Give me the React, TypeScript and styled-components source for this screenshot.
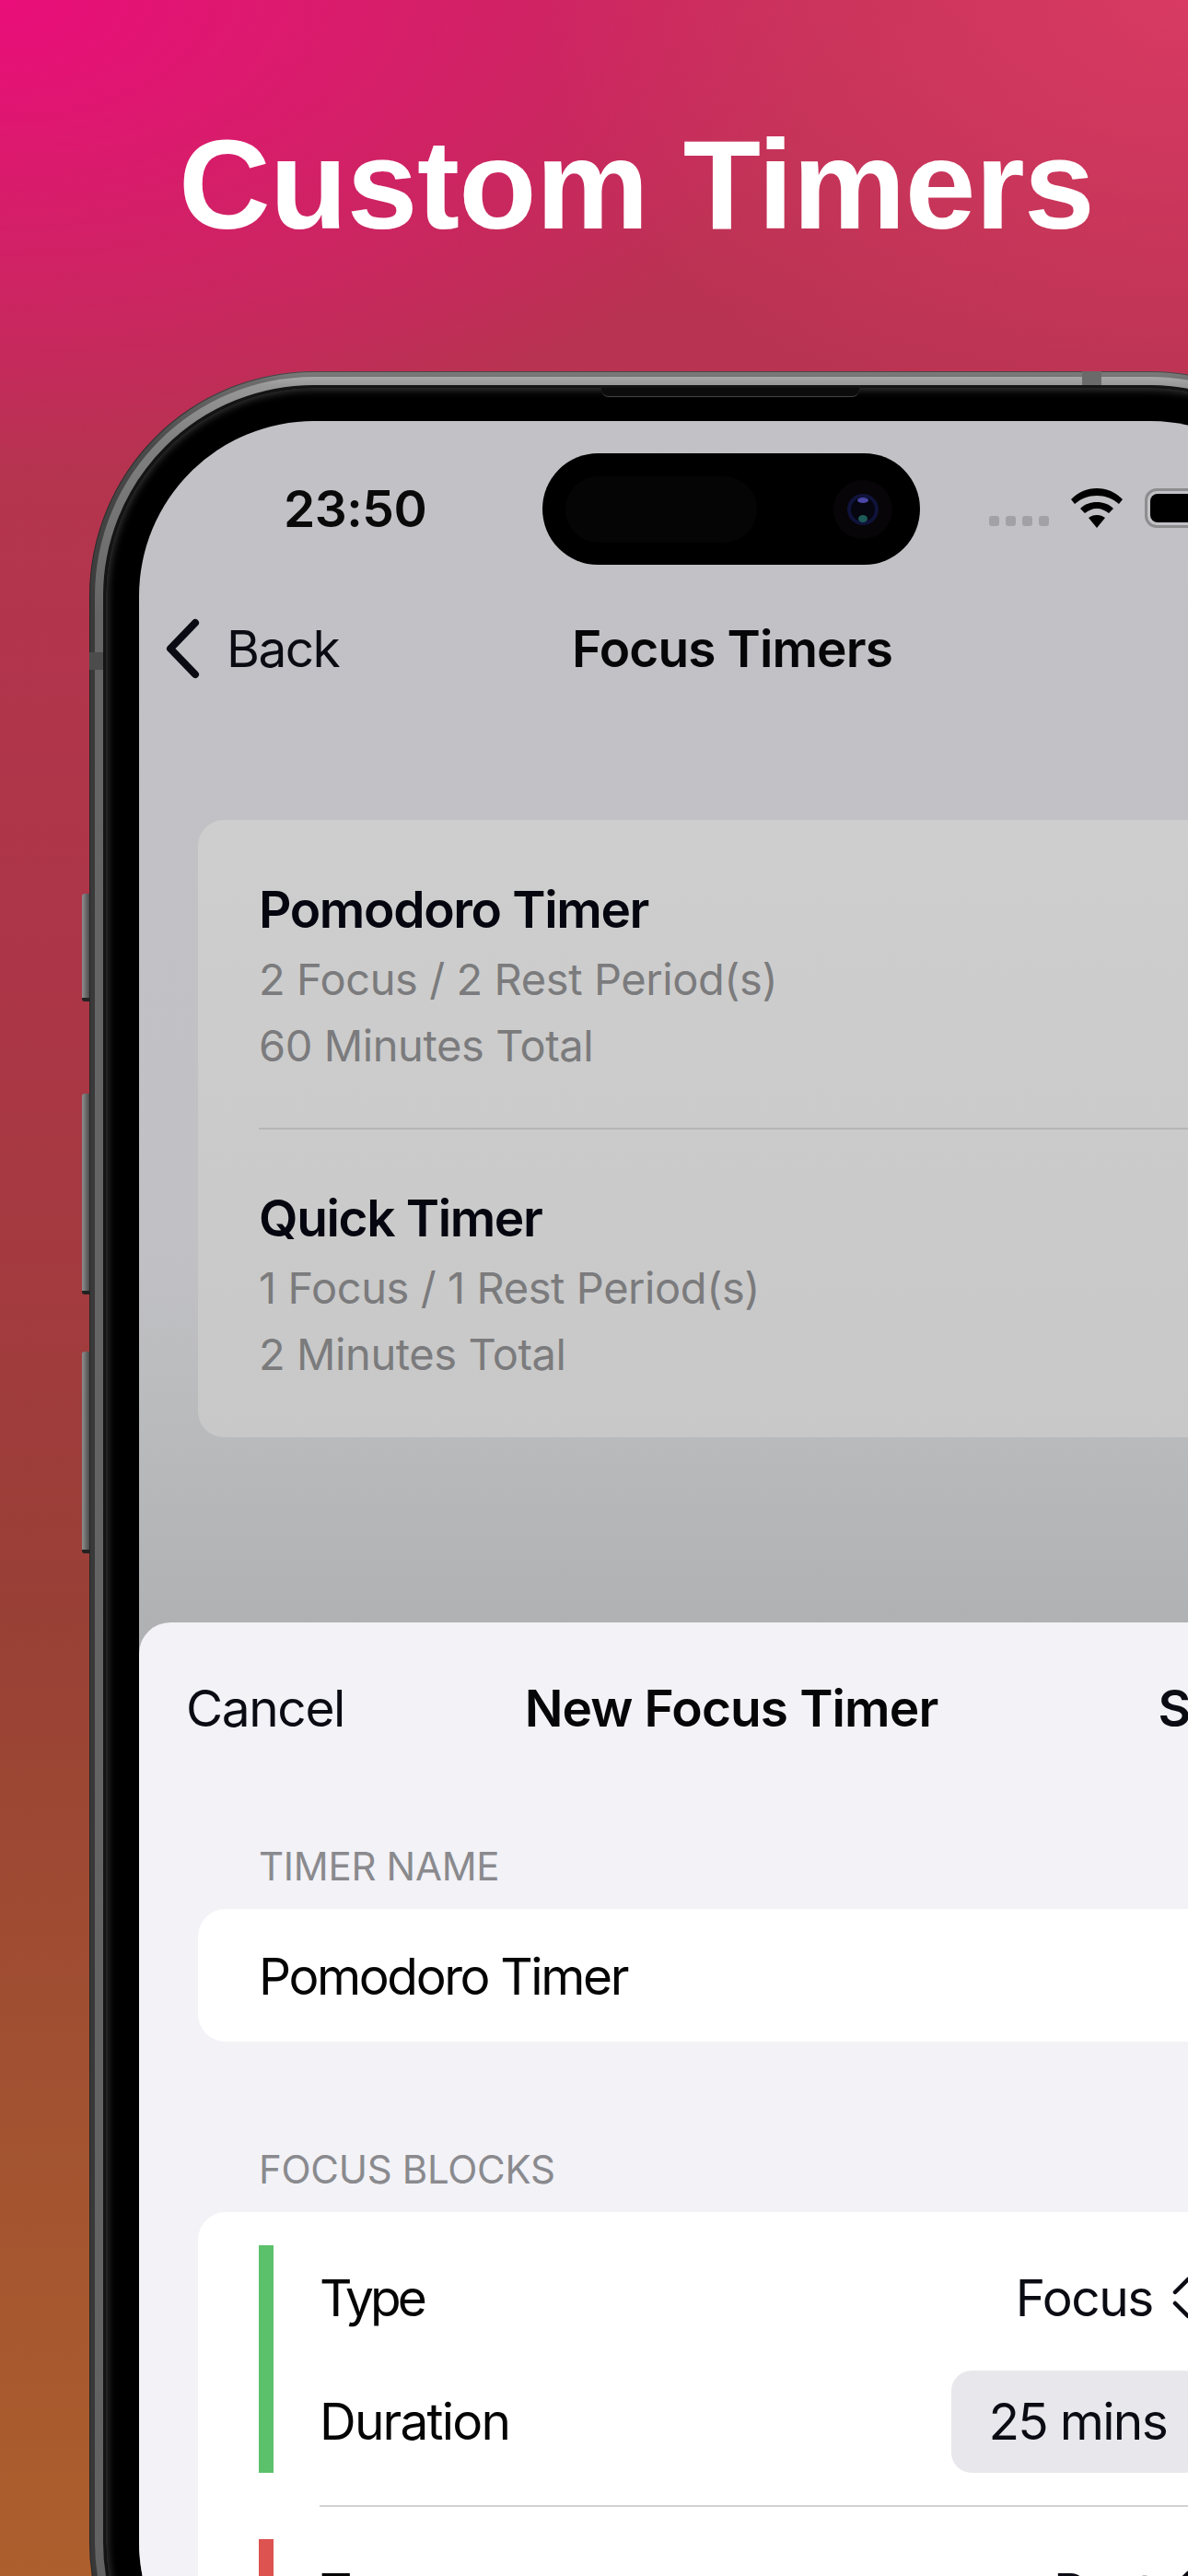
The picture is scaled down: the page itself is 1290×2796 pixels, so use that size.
import React from 'react';
import styled, { createGlobalStyle } from 'styled-components';

const GlobalStyle = createGlobalStyle`
  html, body {
    margin: 0;
    padding: 0;
    background: #b5344f;
  }
  * {
    box-sizing: border-box;
  }
`;

const Page = styled.div`
  width: 1290px;
  height: 2796px;
  overflow: hidden;
  font-family: Inter, 'Liberation Sans', sans-serif;
  background:
    radial-gradient(700px 500px at 1290px 0, rgba(224, 62, 102, 0.72), rgba(224, 62, 102, 0) 100%),
    radial-gradient(900px 520px at 0 0, rgba(234, 14, 122, 1), rgba(234, 14, 122, 0) 100%),
    linear-gradient(180deg, #c22f58 0, #b5344f 500px, #ab3646 1100px, #994036 1750px, #a35430 2350px, #ad5f2d 2796px);
`;

const Headline = styled.h1`
  margin: 0;
  height: 403px;
  padding: 125px 0 0 194px;
  font-family: 'Liberation Sans', Arial, sans-serif;
  font-size: 138px;
  line-height: 150px;
  font-weight: 700;
  letter-spacing: -0.6px;
  color: #fff;
  white-space: nowrap;
`;

const Phone = styled.div`
  position: relative;
  width: 1396px;
  height: 2600px;
  margin-left: 97px;
  padding: 6px;
  border-radius: 244px;
  background: linear-gradient(180deg, #7e7e7e 0, #6c6c6c 10px, #4a4a4a 80px, #3a3a3a 260px, #383838 100%);
  box-shadow: inset 0 0 0 1px rgba(20, 20, 20, 0.5);
`;

const MetalStripe = styled.div`
  height: 100%;
  padding: 9px;
  border-radius: 238px;
  background: linear-gradient(180deg, #a8a8a8 0, #979797 10px, #808080 70px, #656565 260px, #626262 100%);
`;

const SideButton = styled.span<{ $top: number; $height: number }>`
  position: absolute;
  left: -8px;
  top: ${p => p.$top}px;
  width: 8px;
  height: ${p => p.$height}px;
  border-radius: 3px 0 0 3px;
  background: linear-gradient(90deg, #8f8f8f, #4b4b4b);
  border-bottom: 4px solid #222;
`;

const AntennaBand = styled.span`
  position: absolute;
  left: 1078px;
  top: 0;
  width: 21px;
  height: 15px;
  background: #6a6a6a;
`;

const SideBand = styled.span`
  position: absolute;
  left: 0;
  top: 305px;
  width: 15px;
  height: 19px;
  background: #4c4c4c;
`;

const Bezel = styled.div`
  height: 100%;
  padding: 36px;
  border: 3px solid #141414;
  border-radius: 229px;
  background: #000;
  box-shadow: inset 0 0 8px 2px #3a3a3a;
`;

const Speaker = styled.span`
  position: absolute;
  left: 556px;
  top: 18px;
  width: 280px;
  height: 10px;
  border-radius: 0 0 8px 8px;
  background: #0c0c0c;
  border-bottom: 1px solid #444;
`;

const Screen = styled.div`
  position: relative;
  height: 100%;
  overflow: hidden;
  border-radius: 190px;
  background: linear-gradient(180deg, #c2c2c6 0, #c1c1c5 900px, #b9babc 1100px, #b0b1b2 1310px);
`;

const StatusBar = styled.div`
  display: flex;
  align-items: flex-start;
  height: 180px;
  padding: 62px 0 0 157px;
`;

const Clock = styled.span`
  font-size: 55px;
  line-height: 66px;
  font-weight: 600;
  letter-spacing: -0.5px;
  color: #0a0a0a;
`;

const Island = styled.div`
  position: absolute;
  left: 438px;
  top: 35px;
  width: 410px;
  height: 121px;
  padding: 25px 30px 0 25px;
  display: flex;
  justify-content: space-between;
  border-radius: 61px;
  background: #000;
`;

const IslandPill = styled.span`
  width: 208px;
  height: 72px;
  border-radius: 36px;
  background: #050505;
`;

const Lens = styled.svg`
  width: 64px;
  height: 64px;
  margin-top: 4px;
`;

const SignalCluster = styled.div`
  position: absolute;
  left: 923px;
  top: 73px;
  display: flex;
  align-items: flex-start;
`;

const SignalDots = styled.div`
  display: flex;
  gap: 7px;
  margin: 30px 24px 0 0;
`;

const SignalDot = styled.span`
  width: 11px;
  height: 11px;
  border-radius: 3px;
  background: #a2a2a6;
`;

const WifiIcon = styled.svg`
  width: 56px;
  height: 43px;
  margin-right: 24px;
`;

const Battery = styled.div`
  width: 110px;
  height: 43px;
  padding: 3px;
  border: 3px solid #8d8d90;
  border-radius: 13px;
`;

const BatteryFill = styled.span`
  display: block;
  height: 100%;
  border-radius: 8px;
  background: #000;
`;

const NavBar = styled.div`
  display: flex;
  align-items: center;
  justify-content: center;
  position: relative;
  height: 136px;
  padding-bottom: 3px;
`;

const BackLink = styled.div`
  position: absolute;
  left: 28px;
  top: 34px;
  display: flex;
  align-items: center;
  gap: 27px;
  font-size: 55px;
  line-height: 64px;
  letter-spacing: -1.6px;
  color: #0b0b14;
`;

const BackChevron = styled.svg`
  width: 40px;
  height: 66px;
`;

const HeaderTitle = styled.div`
  font-size: 55px;
  line-height: 68px;
  font-weight: 600;
  letter-spacing: -0.88px;
  color: #060608;
  white-space: nowrap;
`;

const TimerList = styled.div`
  width: 1158px;
  height: 670px;
  margin: 117px 0 0 64px;
  padding-left: 66px;
  border-radius: 28px;
  background: linear-gradient(180deg, #cecece, #c8c8c8);
`;

const TimerItem = styled.div<{ $last?: boolean }>`
  height: ${p => (p.$last ? 334 : 336)}px;
  padding-top: ${p => (p.$last ? 66 : 67)}px;
  border-bottom: ${p => (p.$last ? 'none' : '2px solid #b6b6b6')};
`;

const TimerName = styled.div`
  margin-bottom: 10px;
  font-size: 55px;
  line-height: 60px;
  font-weight: 600;
  letter-spacing: -1.35px;
  color: #05060f;
`;

const TimerMeta = styled.div`
  font-size: 47px;
  line-height: 71.5px;
  letter-spacing: -0.42px;
  color: #7b7b7d;
`;

const Sheet = styled.div`
  height: 1200px;
  margin-top: 201px;
  border-radius: 34px 34px 0 0;
  background: #f2f2f7;
`;

const SheetHeader = styled.div`
  display: flex;
  align-items: center;
  justify-content: space-between;
  height: 186px;
  padding: 0 53px 0 51px;
`;

const SheetAction = styled.span<{ $strong?: boolean }>`
  width: 200px;
  font-size: 55px;
  line-height: 68px;
  font-weight: ${p => (p.$strong ? 600 : 400)};
  letter-spacing: ${p => (p.$strong ? -0.4 : -1.4)}px;
  color: #0b0b14;
  text-align: ${p => (p.$strong ? 'right' : 'left')};
`;

const SectionLabel = styled.div<{ $gap: number }>`
  margin-top: ${p => p.$gap}px;
  padding-left: 130px;
  font-size: 42px;
  line-height: 40px;
  letter-spacing: -0.3px;
  color: #8a8a8e;
`;

const Card = styled.div`
  width: 1158px;
  margin: 26px 0 0 64px;
  border-radius: 30px;
  background: #fff;
`;

const NameField = styled.div`
  height: 144px;
  padding-left: 66px;
  font-size: 55px;
  line-height: 146px;
  letter-spacing: -2.4px;
  color: #050505;
`;

const BlockList = styled.div`
  padding: 36px 66px 0;
`;

const Block = styled.div`
  display: flex;
  gap: 50px;
`;

const BlockBar = styled.span<{ $color: string }>`
  flex: none;
  width: 16px;
  height: 247px;
  background: ${p => p.$color};
`;

const BlockFields = styled.div`
  flex: 1;
  display: flex;
  flex-direction: column;
  gap: 21px;
`;

const FieldRow = styled.div<{ $height: number }>`
  display: flex;
  align-items: center;
  justify-content: space-between;
  height: ${p => p.$height}px;
  font-size: 55px;
  line-height: 66px;
  color: #050505;
`;

const FieldLabel = styled.span<{ $tracking: number }>`
  letter-spacing: ${p => p.$tracking}px;
`;

const FieldValue = styled.div`
  display: flex;
  align-items: center;
  gap: 21px;
  letter-spacing: -1.4px;
  color: #0b0b14;
`;

const UpDownIcon = styled.svg`
  width: 34px;
  height: 46px;
`;

const DurationPill = styled.div`
  height: 111px;
  padding: 0 40px;
  border-radius: 22px;
  font-size: 55px;
  line-height: 111px;
  letter-spacing: -1.7px;
  color: #0b0b14;
  background: #e8e8ec;
`;

const BlockDivider = styled.div`
  height: 2px;
  margin: 35px 0 35px 66px;
  background: #d2d2d5;
`;

const UpDown = () => (
  <UpDownIcon viewBox="0 0 34 46" fill="none" stroke="#0b0b14" strokeWidth="4.5" strokeLinecap="round" strokeLinejoin="round">
    <path d="M3 17 17 3l14 14M3 29l14 14 14-14" />
  </UpDownIcon>
);

const App = () => {
  return (
    <Page>
      <GlobalStyle />
      <Headline>Custom Timers</Headline>
      <Phone>
        <SideButton $top={567} $height={117} />
        <SideButton $top={784} $height={218} />
        <SideButton $top={1064} $height={219} />
        <MetalStripe>
          <Bezel>
            <Screen>
              <StatusBar>
                <Clock>23:50</Clock>
              </StatusBar>
              <Island>
                <IslandPill />
                <Lens viewBox="0 0 64 64">
                  <circle cx="32" cy="32" r="32" fill="#070507" />
                  <circle cx="32" cy="32" r="17" fill="#10133a" />
                  <circle cx="32" cy="32" r="13" fill="#05060f" />
                  <ellipse cx="32" cy="22" rx="6" ry="3" fill="#4a47a8" />
                  <ellipse cx="32" cy="42" rx="5" ry="4" fill="#1d5a58" />
                </Lens>
              </Island>
              <SignalCluster>
                <SignalDots>
                  <SignalDot />
                  <SignalDot />
                  <SignalDot />
                  <SignalDot />
                </SignalDots>
                <WifiIcon viewBox="0 0 56 43">
                  <path d="M28 0C17 0 8 4 0 12l4 5c7-6 15-9 24-9s17 3 24 9l4-5C48 4 39 0 28 0Z" fill="#000" />
                  <path d="M28 15c-7 0-13 2-18 7l5 5c4-3 8-5 13-5s9 2 13 5l5-5c-5-5-11-7-18-7Z" fill="#000" />
                  <path d="M28 29c-4 0-6 1-9 3l9 11 9-11c-3-2-5-3-9-3Z" fill="#000" />
                </WifiIcon>
                <Battery>
                  <BatteryFill />
                </Battery>
              </SignalCluster>
              <NavBar>
                <BackLink>
                  <BackChevron viewBox="0 0 40 66" fill="none" stroke="#0b0b14" strokeWidth="8" strokeLinecap="round" strokeLinejoin="round">
                    <path d="M33 5 6 33l27 28" />
                  </BackChevron>
                  Back
                </BackLink>
                <HeaderTitle>Focus Timers</HeaderTitle>
              </NavBar>
              <TimerList>
                <TimerItem>
                  <TimerName>Pomodoro Timer</TimerName>
                  <TimerMeta>2 Focus / 2 Rest Period(s)</TimerMeta>
                  <TimerMeta>60 Minutes Total</TimerMeta>
                </TimerItem>
                <TimerItem $last>
                  <TimerName>Quick Timer</TimerName>
                  <TimerMeta>1 Focus / 1 Rest Period(s)</TimerMeta>
                  <TimerMeta>2 Minutes Total</TimerMeta>
                </TimerItem>
              </TimerList>
              <Sheet>
                <SheetHeader>
                  <SheetAction>Cancel</SheetAction>
                  <HeaderTitle>New Focus Timer</HeaderTitle>
                  <SheetAction $strong>Save</SheetAction>
                </SheetHeader>
                <SectionLabel $gap={59}>TIMER NAME</SectionLabel>
                <Card>
                  <NameField>Pomodoro Timer</NameField>
                </Card>
                <SectionLabel $gap={119}>FOCUS BLOCKS</SectionLabel>
                <Card>
                  <BlockList>
                    <Block>
                      <BlockBar $color="#5cc16b" />
                      <BlockFields>
                        <FieldRow $height={114}>
                          <FieldLabel $tracking={-4}>Type</FieldLabel>
                          <FieldValue>
                            Focus
                            <UpDown />
                          </FieldValue>
                        </FieldRow>
                        <FieldRow $height={112}>
                          <FieldLabel $tracking={-1.8}>Duration</FieldLabel>
                          <DurationPill>25 mins</DurationPill>
                        </FieldRow>
                      </BlockFields>
                    </Block>
                    <BlockDivider />
                    <Block>
                      <BlockBar $color="#dc5350" />
                      <BlockFields>
                        <FieldRow $height={114}>
                          <FieldLabel $tracking={-4}>Type</FieldLabel>
                          <FieldValue>
                            Rest
                            <UpDown />
                          </FieldValue>
                        </FieldRow>
                      </BlockFields>
                    </Block>
                  </BlockList>
                </Card>
              </Sheet>
            </Screen>
          </Bezel>
        </MetalStripe>
        <AntennaBand />
        <SideBand />
        <Speaker />
      </Phone>
    </Page>
  );
};

export default App;
